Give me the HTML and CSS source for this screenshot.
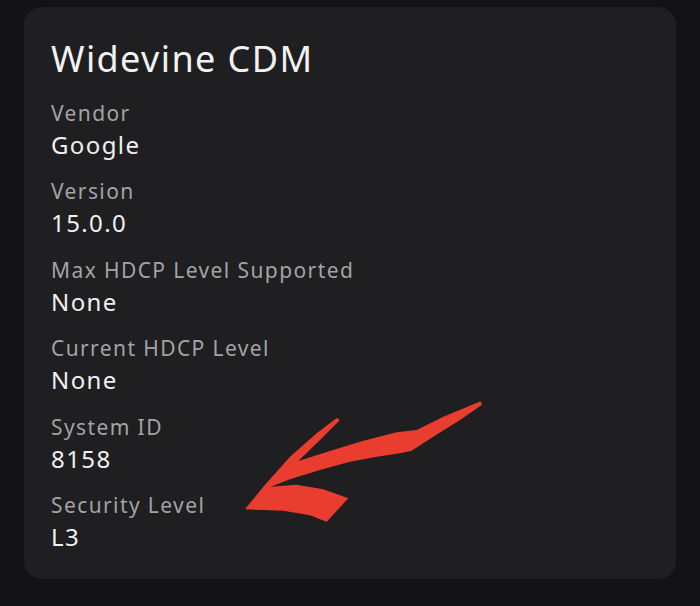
FILE: index.html
```html
<!DOCTYPE html>
<html>
<head>
<meta charset="utf-8">
<link rel="stylesheet" href="styles.css">
</head>
<body>
<div class="card">
  <h1 class="title">Widevine CDM</h1>
  <div class="list">
    <div class="item"><div class="label">Vendor</div><div class="value">Google</div></div>
    <div class="item"><div class="label">Version</div><div class="value">15.0.0</div></div>
    <div class="item"><div class="label">Max HDCP Level Supported</div><div class="value">None</div></div>
    <div class="item"><div class="label">Current HDCP Level</div><div class="value">None</div></div>
    <div class="item"><div class="label">System ID</div><div class="value">8158</div></div>
    <div class="item"><div class="label">Security Level</div><div class="value">L3</div></div>
  </div>
  <svg class="arrow" viewBox="0 0 810 420" width="270" height="140">
    <path fill="#e93d30" d="M45 358 L100 290 L180 200 L260 130 L320 84 L330 90 L270 150 L205 213 L290 186 L400 152 L500 127 L560 120 L640 80 L752 34 L756 44 L690 90 L610 140 L545 182 L510 190 L440 200 L360 215 L270 240 L180 268 L122 290 L200 284 L280 298 L355 325 L330 352 L290 395 L240 376 L160 362 L100 360 Z"/>
  </svg>
</div>
</body>
</html>
```
FILE: styles.css
```css
html, body {
  margin: 0;
  padding: 0;
}
body {
  background: #131215;
  width: 700px;
  height: 606px;
  padding-top: 7px;
  box-sizing: border-box;
  font-family: "Noto Sans", "Open Sans", sans-serif;
  letter-spacing: 1.4px;
}
.card {
  position: relative;
  margin-left: 24px;
  width: 652px;
  height: 572px;
  box-sizing: border-box;
  background: #1f1e21;
  border-radius: 18px;
  padding: 30px 27px 0 27px;
}
.title {
  margin: 0;
  font-weight: 400;
  font-size: 36px;
  line-height: 43px;
  color: #f2f2f2;
}
.list {
  margin-top: 19px;
  display: flex;
  flex-direction: column;
  gap: 15.4px;
}
.label {
  font-size: 21px;
  line-height: 28px;
  color: #a3a3a5;
}
.value {
  font-size: 24px;
  line-height: 35px;
  color: #f0f0f0;
}
.arrow {
  position: absolute;
  left: 206px;
  top: 383px;
}
```
